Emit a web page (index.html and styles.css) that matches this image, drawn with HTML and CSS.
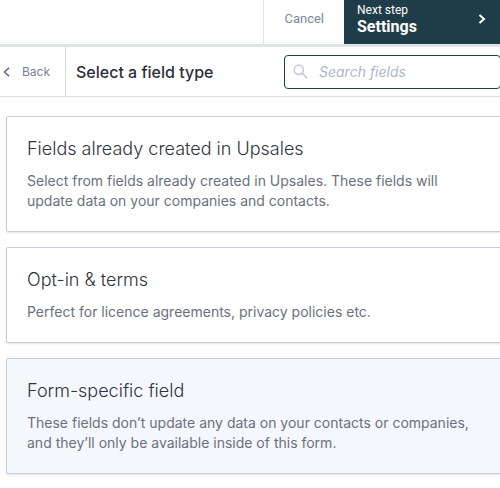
FILE: index.html
```html
<!DOCTYPE html>
<html lang="en">
<head>
<meta charset="utf-8">
<title>Select a field type</title>
<link rel="stylesheet" href="styles.css">
</head>
<body>
<header class="topbar">
  <button class="cancel" type="button">Cancel</button>
  <button class="next" type="button">
    <span class="next-text">
      <span class="next-label">Next step</span>
      <span class="next-name">Settings</span>
    </span>
    <svg class="next-icon" viewBox="0 0 8 10" aria-hidden="true"><path d="M1.5 1 L6 5 L1.5 9"/></svg>
  </button>
</header>
<div class="toolbar">
  <button class="back" type="button">
    <svg class="back-icon" viewBox="0 0 8 10" aria-hidden="true"><path d="M6 .8 L1.5 5 L6 9.2"/></svg>
    Back
  </button>
  <h1 class="heading">Select a field type</h1>
  <label class="search">
    <svg class="search-icon" viewBox="0 0 16 16" aria-hidden="true"><circle cx="5.8" cy="5.8" r="4.6"/><path d="M9.2 9.2 L14.3 14.3"/></svg>
    <input class="search-input" type="search" placeholder="Search fields" aria-label="Search fields">
  </label>
</div>
<main class="cards">
  <button class="card" type="button">
    <span class="card-title">Fields already created in Upsales</span>
    <span class="card-text">Select from fields already created in Upsales. These fields will update data on your companies and contacts.</span>
  </button>
  <button class="card" type="button">
    <span class="card-title">Opt-in &amp; terms</span>
    <span class="card-text">Perfect for licence agreements, privacy policies etc.</span>
  </button>
  <button class="card card-active" type="button">
    <span class="card-title">Form-specific field</span>
    <span class="card-text">These fields don’t update any data on your contacts or companies, and they’ll only be available inside of this form.</span>
  </button>
</main>
</body>
</html>
```

FILE: styles.css
```css
* { box-sizing: border-box; }

body {
  margin: 0;
  background: #fefefe;
  color: #2b2f38;
  font-family: Inter, sans-serif;
  overflow-x: hidden;
}

button {
  margin: 0;
  border: 0;
  background: none;
  font-family: inherit;
  text-align: left;
  cursor: pointer;
}

svg {
  display: block;
  flex: none;
  fill: none;
}

.topbar {
  display: flex;
  justify-content: flex-end;
  height: 47px;
  border-bottom: 3px solid #dfe3e6;
  background: #fff;
}

.cancel {
  padding: 0 20px 6px;
  border-left: 1px solid #e0e3e8;
  color: #7e879d;
  font: 13px/16px Roboto, sans-serif;
}

.next {
  display: flex;
  align-items: center;
  justify-content: space-between;
  width: 156px;
  padding: 0 14px 6px 13px;
  background: #1f3d48;
  color: #fff;
  font-family: Roboto, sans-serif;
}

.next-text,
.next-label,
.next-name {
  display: block;
}

.next-label {
  font-size: 12px;
  line-height: 16px;
}

.next-name {
  font-size: 16px;
  line-height: 18px;
  font-weight: 700;
}

.next-icon {
  width: 8px;
  height: 10px;
  stroke: #fff;
  stroke-width: 2;
}

.toolbar {
  display: flex;
  align-items: center;
  height: 50px;
  border-bottom: 1px solid #dcdfe2;
  background: #fff;
}

.back {
  display: flex;
  align-items: center;
  gap: 11px;
  align-self: stretch;
  width: 66px;
  padding: 0 0 0 3px;
  border-right: 1px solid #d5dadf;
  color: #75809a;
  font-size: 12px;
}

.back-icon {
  width: 8px;
  height: 10px;
  stroke: #64718c;
  stroke-width: 1.6;
}

.heading {
  flex: 1;
  margin: 0;
  padding-left: 10px;
  font-size: 16px;
  line-height: 20px;
  font-weight: 500;
}

.search {
  display: flex;
  align-items: center;
  gap: 10px;
  width: 217px;
  height: 34px;
  margin-right: -1px;
  padding: 0 8px;
  border: 1px solid #1f3d48;
  border-radius: 4px;
}

.search-icon {
  width: 16px;
  height: 16px;
  stroke: #c8ccd8;
  stroke-width: 1.7;
}

.search-input {
  flex: 1;
  min-width: 0;
  padding: 0;
  border: 0;
  outline: 0;
  background: none;
  color: #2b2f38;
  font: 14px/20px Inter, sans-serif;
}

.search-input::placeholder {
  color: #aeb6ca;
  font-style: italic;
}

.cards {
  display: flex;
  flex-direction: column;
  gap: 15px;
  margin-right: -8px;
  padding: 19px 0 14px 6px;
}

.card {
  display: block;
  padding: 20px;
  border: 1px solid #c9ced6;
  border-radius: 2px;
  background: #fff;
  box-shadow: 0 1px 2px #0000001a;
}

.card-active {
  background: #f4f8fc;
}

.card-title,
.card-text {
  display: block;
}

.card-title {
  margin-bottom: 10px;
  color: #2f333b;
  font-size: 18px;
  line-height: 24px;
  font-weight: 300;
}

.card-text {
  color: #6b717b;
  font-size: 14px;
  line-height: 20px;
  font-weight: 400;
}
```
